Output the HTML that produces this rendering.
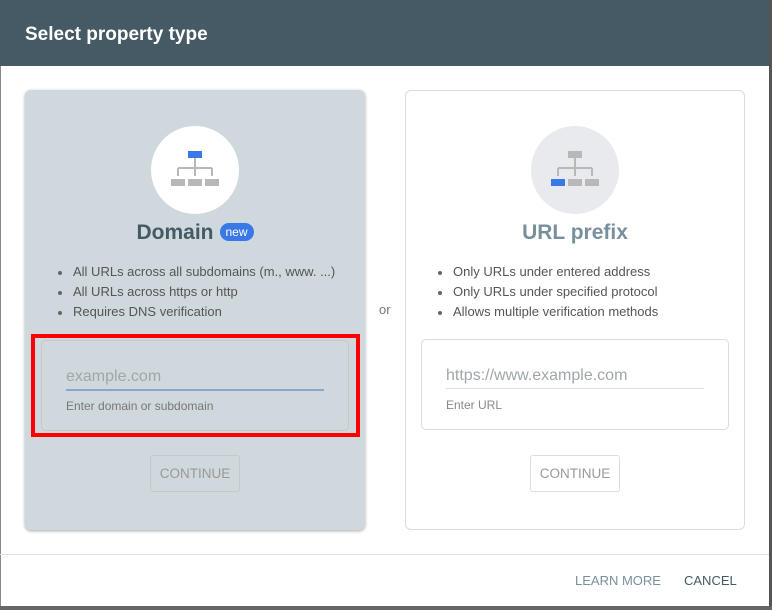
<!DOCTYPE html>
<html><head><style>
*{margin:0;padding:0;box-sizing:border-box}
body{width:772px;height:610px;overflow:hidden;background:#fff;font-family:"Liberation Sans",Arial,sans-serif;position:relative}
.hdr{position:absolute;left:0;top:0;width:772px;height:66px;background:#455a64}
.hdr h1{position:absolute;left:25px;top:24px;font-size:19px;color:#fff;font-weight:bold}
.card{position:absolute;top:90px;width:340px;height:440px;border-radius:6px}
.c1{left:25px;background:#cfd8dc;box-shadow:0 1px 3px rgba(0,0,0,.35)}
.c2{left:405px;background:#fff;border:1px solid #dadce0}
.circ{position:absolute;left:126px;top:36px;width:88px;height:88px;border-radius:50%}
.title{position:absolute;top:131px;width:100%;text-align:center;font-size:21px;font-weight:bold}
.new{display:inline-block;background:#3b78e7;color:#fff;font-size:12px;font-weight:normal;border-radius:10px;padding:2px 6px;vertical-align:3px;margin-left:6px}
ul{position:absolute;left:48px;top:172px;list-style:none;font-size:13px;color:#555}
li{height:20px;line-height:20px;position:relative}
li:before{content:"";position:absolute;left:-15px;top:9px;width:4px;height:4px;border-radius:50%;background:#666}
.inp{position:absolute;width:308px;height:91px;border:1px solid #c3c9cc;border-radius:5px}
.ph{position:absolute;left:24px;top:27px;font-size:16px;color:#a0a6a9}
.line{position:absolute;left:24px;top:48px;width:258px;height:2px;background:#8aa6d0}
.help{position:absolute;left:24px;top:58px;font-size:12px;color:#777}
.btn{position:absolute;top:365px;left:125px;width:90px;height:37px;border:1px solid #c8c8c8;border-radius:3px;font-size:13.5px;color:#999;text-align:center;line-height:36px}
</style></head><body>
<div class="hdr"><h1>Select property type</h1></div>
<div style="position:absolute;left:0;top:66px;width:1px;height:544px;background:#888"></div>
<div style="position:absolute;right:0;top:0;width:3px;height:610px;background:#555"></div>
<div style="position:absolute;left:0;top:606px;width:772px;height:4px;background:#666"></div>

<div class="card c1">
 <div class="circ" style="background:#fff">
  <svg width="88" height="88" viewBox="0 0 88 88"><rect x="37" y="25" width="14" height="7" fill="#3b78e7"/><path d="M44 32v10M27 42h34M27 42v8M44 42v8M61 42v8" stroke="#b8b8b8" stroke-width="2" fill="none"/><rect x="20" y="53" width="14" height="7" fill="#b8b8b8"/><rect x="37" y="53" width="14" height="7" fill="#b8b8b8"/><rect x="54" y="53" width="14" height="7" fill="#b8b8b8"/></svg>
 </div>
 <div class="title" style="color:#455a64">Domain<span class="new">new</span></div>
 <ul><li>All URLs across all subdomains (m., www. ...)</li><li>All URLs across https or http</li><li>Requires DNS verification</li></ul>
 <div style="position:absolute;left:6px;top:244px;width:329px;height:103px;border:4px solid #f00"></div>
 <div class="inp" style="left:16px;top:250px"><div class="ph">example.com</div><div class="line"></div><div class="help">Enter domain or subdomain</div></div>
 <div class="btn">CONTINUE</div>
</div>

<div style="position:absolute;left:379px;top:302px;font-size:13px;color:#777">or</div>

<div class="card c2">
 <div class="circ" style="background:#e8eaed;left:125px;top:35px">
  <svg width="88" height="88" viewBox="0 0 88 88"><rect x="37" y="25" width="14" height="7" fill="#b8b8b8"/><path d="M44 32v10M27 42h34M27 42v8M44 42v8M61 42v8" stroke="#b8b8b8" stroke-width="2" fill="none"/><rect x="20" y="53" width="14" height="7" fill="#3b78e7"/><rect x="37" y="53" width="14" height="7" fill="#b8b8b8"/><rect x="54" y="53" width="14" height="7" fill="#b8b8b8"/></svg>
 </div>
 <div class="title" style="color:#78909c;top:130px">URL prefix</div>
 <ul style="left:47px;top:171px"><li>Only URLs under entered address</li><li>Only URLs under specified protocol</li><li>Allows multiple verification methods</li></ul>
 <div class="inp" style="left:15px;top:248px;border-color:#dadce0"><div class="ph">https://www.example.com</div><div class="line" style="background:#ddd;height:1px"></div><div class="help" style="color:#888">Enter URL</div></div>
 <div class="btn" style="left:124px;top:364px;border-color:#ddd">CONTINUE</div>
</div>

<div style="position:absolute;left:0;top:554px;width:769px;height:1px;background:#e0e0e0"></div>
<div style="position:absolute;left:575px;top:573px;font-size:13px;color:#78909c">LEARN MORE</div>
<div style="position:absolute;left:684px;top:573px;font-size:13px;color:#455a64">CANCEL</div>
</body></html>
